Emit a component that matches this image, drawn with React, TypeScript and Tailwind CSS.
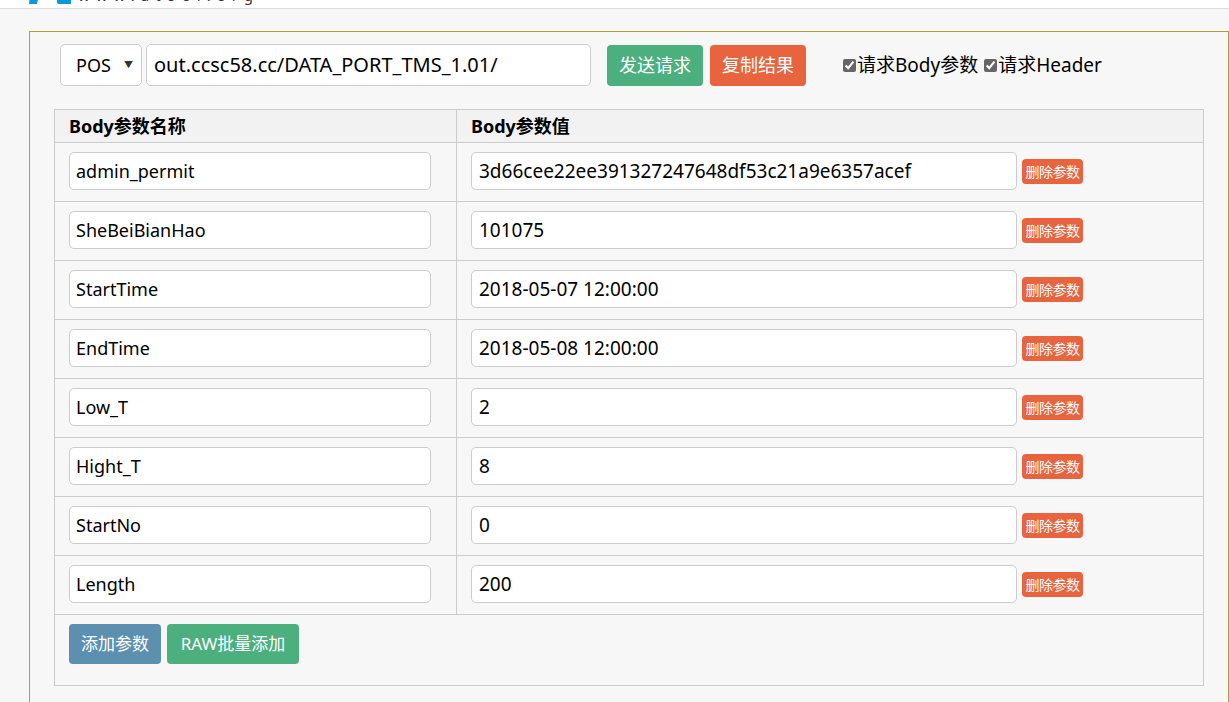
const params = [
  { name: "admin_permit", value: "3d66cee22ee391327247648df53c21a9e6357acef" },
  { name: "SheBeiBianHao", value: "101075" },
  { name: "StartTime", value: "2018-05-07 12:00:00" },
  { name: "EndTime", value: "2018-05-08 12:00:00" },
  { name: "Low_T", value: "2" },
  { name: "Hight_T", value: "8" },
  { name: "StartNo", value: "0" },
  { name: "Length", value: "200" },
];

const font = { fontFamily: '"Noto Sans", "Noto Sans CJK SC", sans-serif' };

export default function App() {
  return (
    <div className="min-h-[702px] bg-[#f7f7f7] text-black" style={font}>
      {/* site header, scrolled mostly out of view */}
      <div className="h-[9px] overflow-hidden bg-white border-b border-[#dddddd]">
        <div className="flex items-end -mt-[14px] h-[18px] pl-[29px]">
          <svg width="42" height="18" viewBox="0 0 42 18">
            <path d="M2 0h10l-4 18H0z" fill="#0b9ad6" />
            <path d="M29 0h13v18H31q-4 0-3-4z" fill="#0b9ad6" />
          </svg>
          <span className="ml-[7px] text-[15px] leading-[18px] tracking-[6px] text-[#333]">www.atool.org</span>
        </div>
      </div>

      {/* request panel */}
      <div className="ml-[29px] mt-[22px] border-l border-t border-r border-[#a6a62e] pl-[24px] pr-[24px] pt-[12px] pb-[20px]">
        <div className="flex items-center pl-[6px]">
          <div className="flex items-center justify-between w-[82px] h-[42px] bg-white border border-[#cccccc] rounded-[5px] pl-[15px] pr-[8px]">
            <span className="text-[18px]">POS</span>
            <span className="text-[9px] text-[#333]">▼</span>
          </div>
          <div className="ml-[4px] flex items-center w-[445px] h-[42px] bg-white border border-[#cccccc] rounded-[5px] pl-[7px] text-[20px]">
            out.ccsc58.cc/DATA_PORT_TMS_1.01/
          </div>
          <button className="ml-[16px] w-[96px] h-[41px] rounded-[4px] bg-[#4caf7e] text-white text-[18px]">发送请求</button>
          <button className="ml-[7px] w-[96px] h-[41px] rounded-[4px] bg-[#e8643f] text-white text-[18px]">复制结果</button>
          <label className="ml-[37px] flex items-center text-[19px]">
            <input type="checkbox" defaultChecked className="w-[13px] h-[13px] accent-[#666] mr-[1px]" />
            请求Body参数
          </label>
          <label className="ml-[6px] flex items-center text-[19px]">
            <input type="checkbox" defaultChecked className="w-[13px] h-[13px] accent-[#666] mr-[1px]" />
            请求Header
          </label>
        </div>

        {/* body params table */}
        <div className="mt-[23px] w-[1150px] border border-[#cccccc]">
          <div className="grid grid-cols-[402px_1fr] h-[33px] bg-[#f2f2f2] border-b border-[#cccccc] font-bold text-[18px]">
            <div className="flex items-center pl-[14px] border-r border-[#cccccc]">Body参数名称</div>
            <div className="flex items-center pl-[14px]">Body参数值</div>
          </div>
          {params.map((p) => (
            <div key={p.name} className="grid grid-cols-[402px_1fr] h-[59px] border-b border-[#cccccc]">
              <div className="flex items-start pt-[9px] pl-[14px] border-r border-[#cccccc]">
                <div className="flex items-center w-[362px] h-[38px] bg-white border border-[#cccccc] rounded-[5px] pl-[6px] text-[18px]">
                  {p.name}
                </div>
              </div>
              <div className="flex items-start pt-[9px] pl-[14px]">
                <div className="flex items-center w-[546px] h-[38px] bg-white border border-[#cccccc] rounded-[5px] pl-[7px] text-[19px]">
                  {p.value}
                </div>
                <button className="ml-[5px] mt-[7px] w-[61px] h-[25px] rounded-[4px] bg-[#e8643f] text-white text-[14px] leading-none tracking-[-0.5px]">删除参数</button>
              </div>
            </div>
          ))}
          <div className="flex items-start gap-[6px] pl-[14px] pt-[9px] h-[70px]">
            <button className="w-[92px] h-[40px] rounded-[4px] bg-[#5d8fb0] text-white text-[17px]">添加参数</button>
            <button className="w-[132px] h-[40px] rounded-[4px] bg-[#4caf7e] text-white text-[17px]">RAW批量添加</button>
          </div>
        </div>
      </div>
    </div>
  );
}
